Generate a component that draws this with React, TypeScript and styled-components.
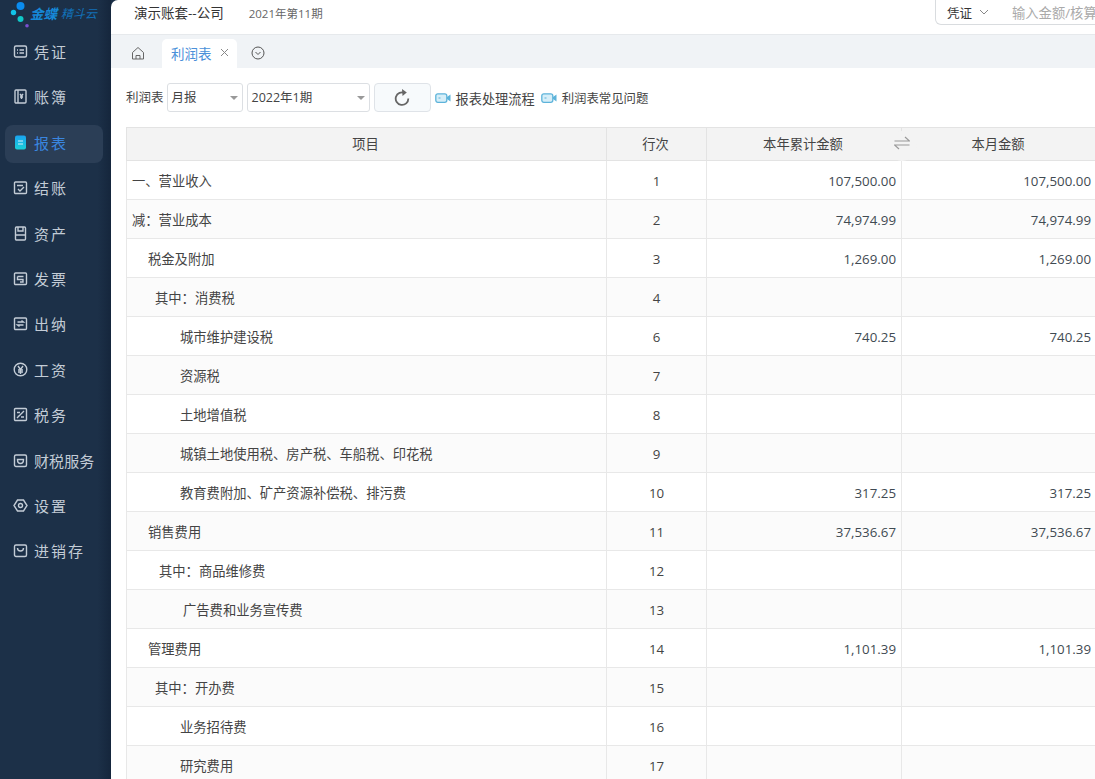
import React from "react";
import styled, { createGlobalStyle } from "styled-components";

const Global = createGlobalStyle`
  html, body { margin: 0; padding: 0; height: 100%; overflow: hidden; background: #1b2f47; }
  #root { height: 100%; }
  * { box-sizing: border-box; }
`;
const FONT = `"Open Sans", "Noto Sans CJK SC", sans-serif`;

const Shell = styled.div`
  display: flex; width: 1095px; height: 779px; overflow: hidden; font-family: ${FONT};
`;
const Sidebar = styled.aside`
  width: 111px; flex: none; height: 100%;
  background: linear-gradient(90deg, #1c3048 0, #1c3048 88%, #15263c 100%);
  display: flex; flex-direction: column; align-items: flex-start;
`;
const LogoRow = styled.div`
  height: 30px; width: 100%; display: flex; align-items: flex-start; position: relative; padding: 5px 0 0 30px; gap: 4px;
`;
const LogoDots = styled.svg`
  position: absolute; left: 8px; top: 0;
`;
const LogoMain = styled.span`
  color: #1688d8; font-size: 13.5px; font-weight: 700; font-style: italic; line-height: 18px;
`;
const LogoSub = styled.span`
  color: #1270b8; font-size: 12px; font-style: italic; line-height: 18px;
`;
const Nav = styled.nav`
  display: flex; flex-direction: column; gap: 7.4px; padding: 4px 0 0 5px; width: 100%;
`;
const NavItem = styled.div<{ $active?: boolean; $tight?: boolean }>`
  width: 98px; height: 38px; display: flex; align-items: center; gap: 6px; padding: 0 0 3px 8px; border-radius: 8px;
  font-size: 15px; white-space: nowrap; letter-spacing: ${(p) => (p.$tight ? "0.1px" : "2px")};
  color: ${(p) => (p.$active ? "#3a86e0" : "#c3ccd6")};
  background: ${(p) => (p.$active ? "#2b3e56" : "transparent")};
  svg { flex: none; }
`;

const Main = styled.main`
  flex: 1; min-width: 0; height: 100%; background: #fff; border-top-left-radius: 7px; overflow: hidden;
  display: flex; flex-direction: column;
`;
const TopBar = styled.header`
  height: 35px; flex: none; display: flex; align-items: flex-start; padding: 0 0 0 23px; border-bottom: 1px solid #e6e9ec;
`;
const Account = styled.span`
  font-size: 13.5px; color: #333; line-height: 26px;
`;
const Period = styled.span`
  font-size: 11.5px; color: #666; line-height: 27px; margin-left: 25px;
`;
const SearchBox = styled.div`
  margin-left: auto; width: 170px; margin-right: -10px; height: 25px; border: 1px solid #d9dcdf; border-top: 0; border-radius: 0 0 0 6px;
  display: flex; align-items: center; padding-left: 11px; white-space: nowrap; overflow: hidden;
`;
const SearchKind = styled.span`
  font-size: 12.5px; color: #333;
`;
const Chevron = styled.svg`
  margin-left: 6px; flex: none;
`;
const SearchHint = styled.span`
  font-size: 13.3px; color: #aaa; margin-left: 22px;
`;
const Tabs = styled.div`
  height: 33px; flex: none; background: #f0f3f6; display: flex; align-items: flex-end; padding-left: 20px;
`;
const HomeSlot = styled.div`
  width: 31px; height: 33px; display: flex; align-items: center; padding-top: 2px;
`;
const Tab = styled.div`
  height: 29px; width: 75px; background: #fff; border-radius: 5px 5px 0 0; display: flex; align-items: center; padding: 0 0 2px 9px;
  color: #4a90d9; font-size: 13.5px; gap: 8px;
`;
const TabMenu = styled.div`
  height: 33px; display: flex; align-items: center; margin-left: 14px; padding-top: 2px;
`;
const Toolbar = styled.div`
  height: 59px; flex: none; display: flex; align-items: flex-start; padding: 15px 0 0 15px;
`;
const ToolLabel = styled.span`
  font-size: 12.5px; color: #444; line-height: 29px; margin-right: 3px;
`;
const Select = styled.div<{ $w: number }>`
  width: ${(p) => p.$w}px; height: 29px; border: 1px solid #dcdfe3; border-radius: 3px; margin-right: 4px; padding: 0 4px 2px 4px;
  display: flex; align-items: center; justify-content: space-between; font-size: 12.5px; color: #444; background: #fff;
  &::after { content: ""; border: 4px solid transparent; border-top: 4px solid #999; border-bottom: 0; margin-top: 2px; }
`;
const RefreshBtn = styled.div`
  width: 57px; height: 29px; border: 1px solid #dfe3e8; border-radius: 4px; background: #f7fafc; display: flex; align-items: center; justify-content: center;
`;
const HelpLink = styled.span<{ $size: number; $gap: number }>`
  display: inline-flex; align-items: center; gap: 5px; height: 29px; padding-top: 1px; margin-left: ${(p) => p.$gap}px;
  font-size: ${(p) => p.$size}px; color: #444; white-space: nowrap;
`;
const TableWrap = styled.div`
  position: relative; margin-left: 15px; width: 970px;
`;
const Table = styled.table`
  width: 970px; table-layout: fixed; border-collapse: collapse; font-size: 13.3px; color: #444;
`;
const Col = styled.col<{ $w: number }>`
  width: ${(p) => p.$w}px;
`;
const Th = styled.th`
  height: 33px; background: #f3f3f3; font-weight: 400; font-size: 13.3px; color: #444; text-align: center;
  border: 1px solid #e3e3e3; padding: 0 2px 2px 0;
`;
const Row = styled.tr<{ $alt: boolean }>`
  background: ${(p) => (p.$alt ? "#fbfbfb" : "#fff")};
`;
const NameCell = styled.td<{ $indent: number }>`
  height: 39px; border: 1px solid #e8e8e8; padding: 0 0 0 ${(p) => p.$indent}px; font-size: 13.3px;
`;
const LineCell = styled.td`
  border: 1px solid #e8e8e8; text-align: center; padding: 1px 0 0; font-size: 13.3px;
`;
const AmountCell = styled.td`
  border: 1px solid #e8e8e8; text-align: right; padding: 1px 5px 0 0; font-size: 13.3px; color: #3f4a52;
`;
const SwapBubble = styled.div`
  position: absolute; left: 761px; top: 4px; width: 30px; height: 30px; border-radius: 50%; background: #f3f3f3;
  display: flex; justify-content: center; padding-top: 5px;
`;

const Frame = ({ children }: { children?: React.ReactNode }) => (
  <svg width="15" height="15" viewBox="0 0 15 15" fill="none" stroke="#c3ccd6" strokeWidth="1.4">{children}</svg>
);
const icons: Record<string, React.ReactNode> = {
  凭证: <Frame><rect x="1.5" y="2" width="12" height="11" rx="1.5" /><path d="M4 6h1M6.5 6h4.5M4 9h1M6.5 9h4.5" /></Frame>,
  账簿: <Frame><rect x="2" y="1" width="11" height="13" rx="1" /><path d="M5 1v13M7 5l1.5 2L10 5M7 8h3M8.5 7v3" /></Frame>,
  报表: (
    <svg width="15" height="15" viewBox="0 0 15 15"><defs><linearGradient id="rp" x1="0" y1="0" x2="0" y2="1"><stop offset="0" stopColor="#1aa3f0" /><stop offset="1" stopColor="#1ad0d8" /></linearGradient></defs><rect x="2" y="0.5" width="11" height="14" rx="2" fill="url(#rp)" /><path d="M5 6h5M5 9h5" stroke="#cfeffa" strokeWidth="1.2" /></svg>
  ),
  结账: <Frame><rect x="1.5" y="2" width="12" height="11.5" rx="1" /><path d="M4 5.5h6M5 9l2 2 4-4" /></Frame>,
  资产: <Frame><rect x="2.5" y="1" width="10" height="13" rx="1" /><path d="M5 1v4h5V1M2.5 9h10" /></Frame>,
  发票: <Frame><rect x="1.5" y="2" width="12" height="11.5" rx="1" /><path d="M4.5 5.5h6M4.5 5.5v3H10V11H7" /></Frame>,
  出纳: <Frame><rect x="1.5" y="2" width="12" height="11.5" rx="1" /><path d="M4.5 6h6l-2-1.5M10.5 9h-6l2 1.5" /></Frame>,
  工资: <Frame><circle cx="7.5" cy="7.5" r="6.3" /><path d="M5 4l2.5 3.5L10 4M7.5 7.5V12M5 8h5M5 10h5" /></Frame>,
  税务: <Frame><rect x="1.5" y="1.5" width="12" height="12" rx="1" /><path d="M4 11l7-7M4 5.5h3M8 10h3M5.5 8.5v1" /></Frame>,
  财税服务: <Frame><rect x="1.5" y="2" width="12" height="11.5" rx="1.5" /><path d="M4.5 6.5c0 2.5 1.5 4 3 4s3-1.5 3-4z" /></Frame>,
  设置: <Frame><path d="M4.5 2h6L14 7.5 10.5 13h-6L1 7.5z" /><circle cx="7.5" cy="7.5" r="2" /></Frame>,
  进销存: <Frame><rect x="1.5" y="2" width="12" height="11.5" rx="1.5" /><path d="M4.5 5c0 2 1.5 3 3 3s3-1 3-3" /></Frame>,
};
const navNames = ["凭证", "账簿", "报表", "结账", "资产", "发票", "出纳", "工资", "税务", "财税服务", "设置", "进销存"];

const Camera = () => (
  <svg width="16" height="12" viewBox="0 0 16 12">
    <rect x="0.8" y="1.8" width="11" height="8.5" rx="2" fill="#d6eef8" stroke="#5db3da" strokeWidth="1.3" />
    <path d="M12 5l3.5-2.5v7L12 7z" fill="#5db3da" />
    <path d="M3.5 6h2" stroke="#5db3da" />
  </svg>
);

type R = { name: string; indent: number; line: string; a?: string };
const rows: R[] = [
  { name: "一、营业收入", indent: 5, line: "1", a: "107,500.00" },
  { name: "减\uFF1A营业成本", indent: 5, line: "2", a: "74,974.99" },
  { name: "税金及附加", indent: 21, line: "3", a: "1,269.00" },
  { name: "其中\uFF1A消费税", indent: 28, line: "4" },
  { name: "城市维护建设税", indent: 53, line: "6", a: "740.25" },
  { name: "资源税", indent: 53, line: "7" },
  { name: "土地增值税", indent: 53, line: "8" },
  { name: "城镇土地使用税、房产税、车船税、印花税", indent: 53, line: "9" },
  { name: "教育费附加、矿产资源补偿税、排污费", indent: 53, line: "10", a: "317.25" },
  { name: "销售费用", indent: 21, line: "11", a: "37,536.67" },
  { name: "其中\uFF1A商品维修费", indent: 32, line: "12" },
  { name: "广告费和业务宣传费", indent: 56, line: "13" },
  { name: "管理费用", indent: 21, line: "14", a: "1,101.39" },
  { name: "其中\uFF1A开办费", indent: 28, line: "15" },
  { name: "业务招待费", indent: 53, line: "16" },
  { name: "研究费用", indent: 53, line: "17" },
];

export default function App() {
  return (
    <Shell>
      <Global />
      <Sidebar>
        <LogoRow>
          <LogoDots width="24" height="30" viewBox="0 0 24 30">
            <circle cx="12.5" cy="6" r="4" fill="#0a8cf0" />
            <circle cx="5.5" cy="12.5" r="2.7" fill="#12c4e8" />
            <circle cx="12.5" cy="19" r="3" fill="#10c8c8" />
            <circle cx="19" cy="25.7" r="1.8" fill="#7a4fd0" />
          </LogoDots>
          <LogoMain>金蝶</LogoMain>
          <LogoSub>精斗云</LogoSub>
        </LogoRow>
        <Nav>
          {navNames.map((n) => (
            <NavItem key={n} $active={n === "报表"} $tight={n === "财税服务"}>{icons[n]}{n}</NavItem>
          ))}
        </Nav>
      </Sidebar>
      <Main>
        <TopBar>
          <Account>演示账套--公司</Account>
          <Period>2021年第11期</Period>
          <SearchBox>
            <SearchKind>凭证</SearchKind>
            <Chevron width="12" height="12" viewBox="0 0 12 12" fill="none" stroke="#888"><path d="M2 4l4 4 4-4" /></Chevron>
            <SearchHint>输入金额/核算</SearchHint>
          </SearchBox>
        </TopBar>
        <Tabs>
          <HomeSlot>
            <svg width="14" height="14" viewBox="0 0 14 14" fill="none" stroke="#666" strokeWidth="1"><path d="M1.5 6.5L7 1.5l5.5 5V13h-11zM5 13V9.5h4V13" /></svg>
          </HomeSlot>
          <Tab>
            利润表
            <svg width="9" height="9" viewBox="0 0 9 9" stroke="#888" strokeWidth="1"><path d="M1 1l7 7M8 1l-7 7" /></svg>
          </Tab>
          <TabMenu>
            <svg width="14" height="14" viewBox="0 0 14 14" fill="none" stroke="#555" strokeWidth="1"><circle cx="7" cy="7" r="6" /><path d="M4.5 6L7 8.5 9.5 6" /></svg>
          </TabMenu>
        </Tabs>
        <Toolbar>
          <ToolLabel>利润表</ToolLabel>
          <Select $w={76}>月报</Select>
          <Select $w={123}>2022年1期</Select>
          <RefreshBtn>
            <svg width="16" height="17" viewBox="0 0 16 17" fill="none" stroke="#666" strokeWidth="1.8"><path d="M10.8 4A6.3 6.3 0 1 0 14.3 9.5" /><path d="M8 0l4.800 3.600L8.500 7z" fill="#666" stroke="none" /></svg>
          </RefreshBtn>
          <HelpLink $size={13.2} $gap={4}><Camera />报表处理流程</HelpLink>
          <HelpLink $size={12.4} $gap={6}><Camera />利润表常见问题</HelpLink>
        </Toolbar>
        <TableWrap>
          <Table>
            <colgroup>
              <Col $w={480} /><Col $w={100} /><Col $w={195} /><Col $w={195} />
            </colgroup>
            <thead>
              <tr><Th>项目</Th><Th>行次</Th><Th>本年累计金额</Th><Th>本月金额</Th></tr>
            </thead>
            <tbody>
              {rows.map((r, i) => (
                <Row key={r.line} $alt={i % 2 === 1}>
                  <NameCell $indent={r.indent}>{r.name}</NameCell>
                  <LineCell>{r.line}</LineCell>
                  <AmountCell>{r.a}</AmountCell>
                  <AmountCell>{r.a}</AmountCell>
                </Row>
              ))}
            </tbody>
          </Table>
          <SwapBubble>
            <svg width="16" height="14" viewBox="0 0 16 14" fill="none" stroke="#999" strokeWidth="1.2"><path d="M0.5 5h15L11 1M15.5 9H0.5L5 13" /></svg>
          </SwapBubble>
        </TableWrap>
      </Main>
    </Shell>
  );
}
